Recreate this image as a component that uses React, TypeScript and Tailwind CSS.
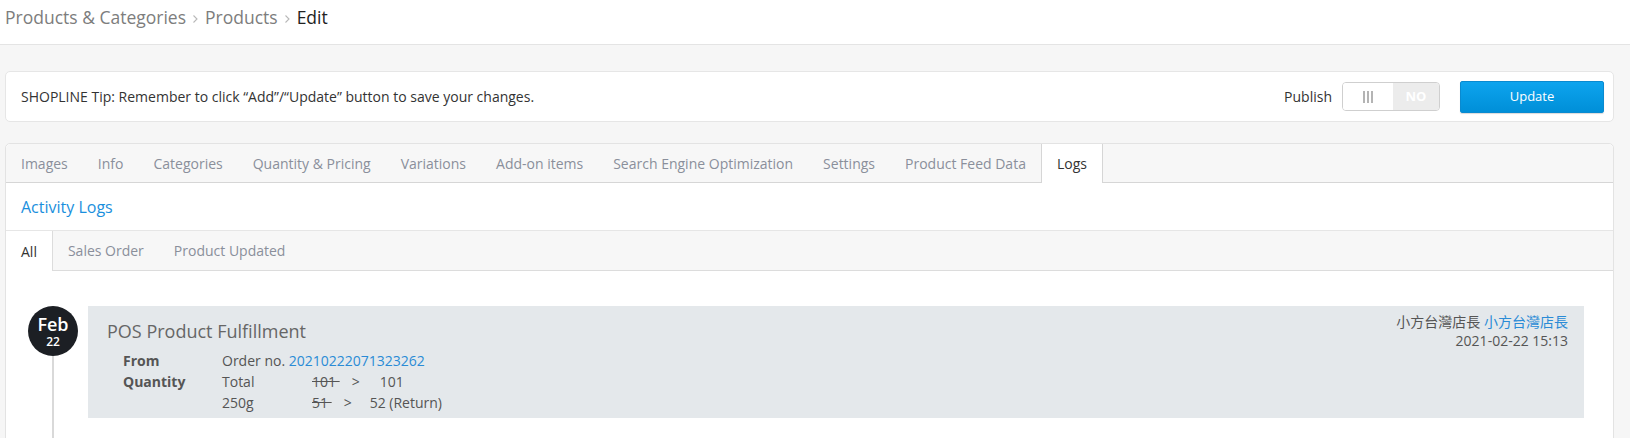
import React from 'react';

const mainTabs = [
  'Images',
  'Info',
  'Categories',
  'Quantity & Pricing',
  'Variations',
  'Add-on items',
  'Search Engine Optimization',
  'Settings',
  'Product Feed Data',
  'Logs',
];

const logTabs = ['All', 'Sales Order', 'Product Updated'];

const Chevron = () => (
  <svg width="7" height="10" viewBox="0 0 7 10" className="mx-[6px] mt-[2px]">
    <polyline points="1.5,1.5 5,5 1.5,8.5" fill="none" stroke="#b8b8b8" strokeWidth="1.1" />
  </svg>
);

export default function App() {
  return (
    <div className="min-h-screen bg-[#f6f6f6] font-['Open_Sans','Noto_Sans_CJK_TC',sans-serif] text-[#333]">
      {/* breadcrumb */}
      <header className="h-[45px] bg-white border-b border-[#e4e4e4] pl-[5px] flex items-center">
        <div className="flex items-center text-[17.5px] leading-none text-[#7d7d7d] pb-[8px]">
          <span>Products &amp; Categories</span>
          <Chevron />
          <span>Products</span>
          <Chevron />
          <span className="text-[#222]">Edit</span>
        </div>
      </header>

      <div className="pl-[5px] pr-[16px] pt-[26px]">
        {/* tip bar */}
        <div className="h-[51px] bg-white border border-[#e6e6e6] rounded-[5px] flex items-center justify-between pl-[15px] pr-[9px]">
          <span className="text-[14px] text-[#333]">
            SHOPLINE Tip: Remember to click “Add”/“Update” button to save your changes.
          </span>
          <div className="flex items-center">
            <span className="text-[14px] text-[#333] mr-[10px]">Publish</span>
            <div className="flex w-[98px] h-[29px] border border-[#cfcfcf] rounded-[4px] overflow-hidden">
              <div className="w-[50px] bg-white flex items-center justify-center gap-[2px]">
                <span className="w-[2px] h-[12px] bg-[#b4b4b4]" />
                <span className="w-[2px] h-[12px] bg-[#b4b4b4]" />
                <span className="w-[2px] h-[12px] bg-[#b4b4b4]" />
              </div>
              <div className="flex-1 bg-[#ececec] flex items-center justify-center text-[13px] font-bold text-white">
                NO
              </div>
            </div>
            <button className="ml-[20px] w-[144px] h-[32px] rounded-[2px] border border-[#0a8ad0] bg-gradient-to-b from-[#0ea4ee] to-[#008fd8] text-white text-[13px] shadow-[0_1px_1px_rgba(0,0,0,0.15)]">
              Update
            </button>
          </div>
        </div>

        {/* main card */}
        <div className="mt-[21px] bg-white border border-[#e3e3e3] rounded-t-[5px]">
          <div className="flex h-[39px] bg-[#f7f7f7] border-b border-[#d6d6d6] rounded-t-[5px]">
            {mainTabs.map((t) =>
              t === 'Logs' ? (
                <div
                  key={t}
                  className="px-[15px] flex items-center text-[14px] text-[#333] bg-white border-x border-[#d6d6d6] h-[39px] -mb-px"
                >
                  {t}
                </div>
              ) : (
                <div key={t} className="px-[15px] flex items-center text-[14px] text-[#8a8f9b]">
                  {t}
                </div>
              )
            )}
          </div>

          <div className="h-[48px] border-b border-[#e6e6e6] px-[15px] flex items-center">
            <span className="text-[16px] text-[#1a8fdd]">Activity Logs</span>
          </div>

          <div className="flex h-[40px] bg-[#f7f7f7] border-b border-[#dcdcdc]">
            {logTabs.map((t, i) =>
              i === 0 ? (
                <div
                  key={t}
                  className="px-[15px] flex items-center text-[14px] text-[#333] bg-white border-r border-[#dcdcdc] h-[40px] -mb-px"
                >
                  {t}
                </div>
              ) : (
                <div key={t} className="px-[15px] flex items-center text-[14px] text-[#8a8f9b]">
                  {t}
                </div>
              )
            )}
          </div>

          {/* timeline */}
          <div className="pt-[35px] pl-[22px] pr-[29px] pb-[20px]">
            <div className="flex items-start">
              <div className="flex flex-col items-center w-[50px] shrink-0">
                <div className="w-[50px] h-[50px] rounded-full bg-[#1c1f24] text-white flex flex-col items-center justify-center leading-none">
                  <span className="text-[18px] font-semibold">Feb</span>
                  <span className="text-[12px] font-semibold mt-[3px]">22</span>
                </div>
                <div className="w-[2px] h-[100px] bg-[#d9d9d9]" />
              </div>

              <div className="ml-[10px] flex-1 bg-[#e4e8eb] flex justify-between pl-[19px] pr-[16px] pb-[5px]">
                <div className="pt-[13px]">
                  <div className="text-[18px] leading-[24px] text-[#666]">POS Product Fulfillment</div>
                  <div className="mt-[7px] pl-[16px] text-[14px] leading-[21px] text-[#555]">
                    <div className="flex">
                      <span className="w-[99px] font-bold">From</span>
                      <span>
                        Order no. <span className="text-[#2a8bd6]">20210222071323262</span>
                      </span>
                    </div>
                    <div className="flex">
                      <span className="w-[99px] font-bold">Quantity</span>
                      <div>
                        <div className="flex">
                          <span className="w-[90px]">Total</span>
                          <span>
                            <span className="line-through">101 </span>
                            <span className="ml-[12px]">&gt;</span>
                            <span className="ml-[20px]">101</span>
                          </span>
                        </div>
                        <div className="flex">
                          <span className="w-[90px]">250g</span>
                          <span>
                            <span className="line-through">51 </span>
                            <span className="ml-[12px]">&gt;</span>
                            <span className="ml-[18px]">52 (Return)</span>
                          </span>
                        </div>
                      </div>
                    </div>
                  </div>
                </div>
                <div className="pt-[6px] text-right text-[14px] leading-[19px] text-[#555]">
                  <div>
                    小方台灣店長 <span className="text-[#2a8bd6]">小方台灣店長</span>
                  </div>
                  <div>2021-02-22 15:13</div>
                </div>
              </div>
            </div>
          </div>
        </div>
      </div>
    </div>
  );
}
